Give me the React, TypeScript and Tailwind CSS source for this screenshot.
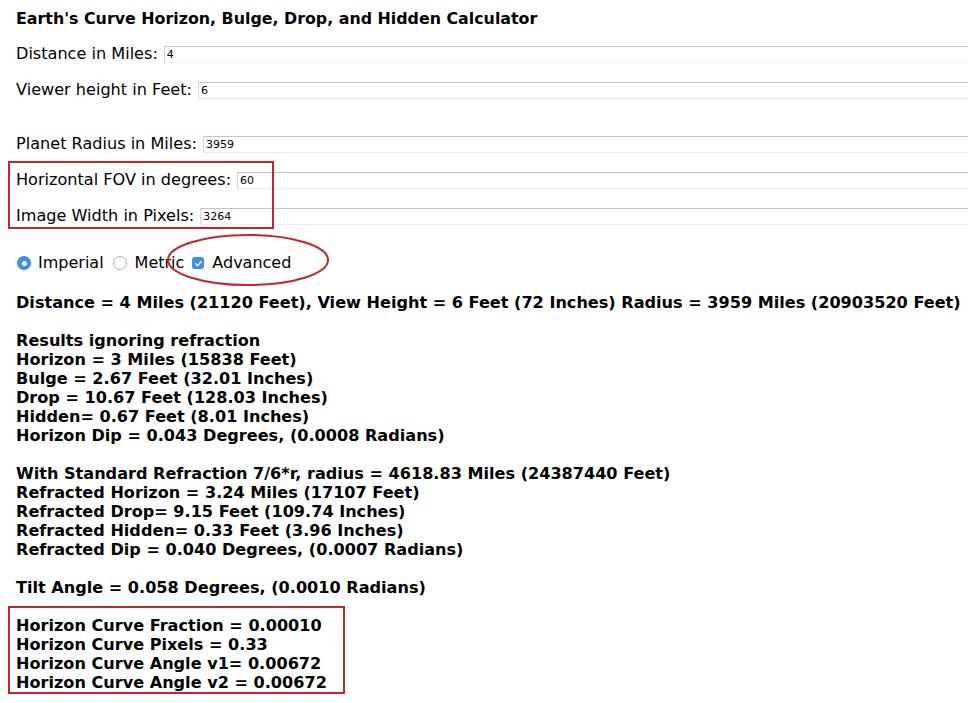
import React from 'react';

/*
Earth curve calculator page: inputs, unit radios, and result lines.
Red annotations (boxes, ellipse) are drawn over the page.
*/
const font = { fontFamily: '"DejaVu Sans", Verdana, sans-serif' };

function Field({ label, value }: { label: string; value: string }) {
  return (
    <div className="flex items-center h-[20px] whitespace-nowrap">
      <span className="text-[16.1px] text-black">{label}</span>
      <input
        readOnly
        value={value}
        className="ml-[6px] shrink-0 w-[1000px] h-[17px] px-[2px] text-[11px] text-black bg-white border border-t-[#c4c4c4] border-x-[#d6d6d6] border-b-[#ececec] outline-none"
        style={font}
      />
    </div>
  );
}

const lines1 = [
  'Results ignoring refraction',
  'Horizon = 3 Miles (15838 Feet)',
  'Bulge = 2.67 Feet (32.01 Inches)',
  'Drop = 10.67 Feet (128.03 Inches)',
  'Hidden= 0.67 Feet (8.01 Inches)',
  'Horizon Dip = 0.043 Degrees, (0.0008 Radians)',
];

const lines2 = [
  'With Standard Refraction 7/6*r, radius = 4618.83 Miles (24387440 Feet)',
  'Refracted Horizon = 3.24 Miles (17107 Feet)',
  'Refracted Drop= 9.15 Feet (109.74 Inches)',
  'Refracted Hidden= 0.33 Feet (3.96 Inches)',
  'Refracted Dip = 0.040 Degrees, (0.0007 Radians)',
];

const curve = [
  'Horizon Curve Fraction = 0.00010',
  'Horizon Curve Pixels = 0.33',
  'Horizon Curve Angle v1= 0.00672',
  'Horizon Curve Angle v2 = 0.00672',
];

export default function App() {
  return (
    <div className="w-[968px] h-[703px] overflow-hidden bg-white text-black pl-[16px]" style={font}>
      <div className="pt-[9px] h-[29px] font-bold text-[15.85px] leading-[20px] whitespace-nowrap">
        Earth's Curve Horizon, Bulge, Drop, and Hidden Calculator
      </div>

      <div className="mt-[15px]">
        <Field label="Distance in Miles:" value="4" />
      </div>
      <div className="mt-[16px]">
        <Field label="Viewer height in Feet:" value="6" />
      </div>
      <div className="mt-[34px]">
        <Field label="Planet Radius in Miles:" value="3959" />
      </div>

      {/* FOV + width, boxed in red */}
      <div className="relative mt-[16px]">
        <Field label="Horizontal FOV in degrees:" value="60" />
        <div className="mt-[16px]">
          <Field label="Image Width in Pixels:" value="3264" />
        </div>
        <div className="pointer-events-none absolute left-[-8px] top-[-9px] w-[266px] h-[68px] border-2 border-[#c0262c]" />
      </div>

      <div className="relative mt-[27px] h-[20px] flex items-center text-[16px] whitespace-nowrap">
        <span className="w-[14px] h-[14px] rounded-full bg-[#3b8eea] flex items-center justify-center ml-[1px]">
          <span className="w-[5px] h-[5px] rounded-full bg-white" />
        </span>
        <span className="ml-[7px]">Imperial</span>
        <span className="ml-[9px] w-[14px] h-[14px] rounded-full border border-[#b4b4b4] bg-white" />
        <span className="ml-[8px]">Metric</span>
        <span className="ml-[8px] w-[12px] h-[12px] rounded-[3px] bg-[#3b8eea] flex items-center justify-center">
          <svg width="9" height="9" viewBox="0 0 10 10">
            <path d="M2 5.2 L4.2 7.4 L8 2.8" fill="none" stroke="white" strokeWidth="1.6" strokeLinecap="round" strokeLinejoin="round" />
          </svg>
        </span>
        <span className="ml-[8px]">Advanced</span>
        <svg className="pointer-events-none absolute left-[150px] top-[-20px]" width="166" height="56" viewBox="0 0 166 56">
          <ellipse cx="82" cy="27" rx="80" ry="25" fill="none" stroke="#c0262c" strokeWidth="2" />
        </svg>
      </div>

      <div className="font-bold text-[16.1px] leading-[19px] whitespace-nowrap">
        <div className="mt-[20px]">
          Distance = 4 Miles (21120 Feet), View Height = 6 Feet (72 Inches) Radius = 3959 Miles (20903520 Feet)
        </div>
        <div className="mt-[19px]">
          {lines1.map((l) => (
            <div key={l}>{l}</div>
          ))}
        </div>
        <div className="mt-[19px]">
          {lines2.map((l) => (
            <div key={l}>{l}</div>
          ))}
        </div>
        <div className="mt-[19px]">Tilt Angle = 0.058 Degrees, (0.0010 Radians)</div>
        <div className="ml-[-8px] mt-[9px] w-[337px] border-2 border-[#c0262c] pl-[6px] pt-[8px]">
          {curve.map((l) => (
            <div key={l}>{l}</div>
          ))}
        </div>
      </div>
    </div>
  );
}
